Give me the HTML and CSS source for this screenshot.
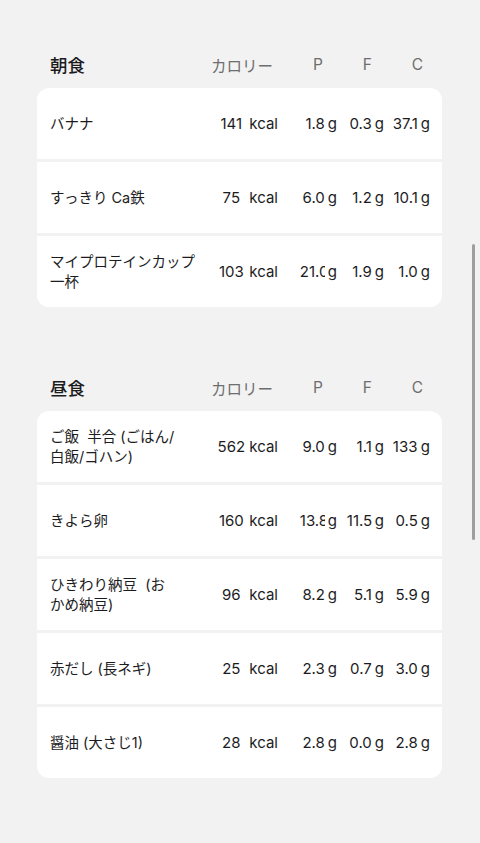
FILE: index.html
```html
<!DOCTYPE html>
<html lang="ja">
<head>
  <meta charset="UTF-8">
  <meta name="viewport" content="width=device-width, initial-scale=1.0">
  <title>食事記録</title>
  <link rel="stylesheet" href="styles.css">
</head>
<body>
  <div class="page">

    <section class="meal">
      <div class="meal-head">
        <h3 class="meal-title">朝食</h3>
        <span class="col-label label-cal">カロリー</span>
        <span class="col-label label-p">P</span>
        <span class="col-label label-f">F</span>
        <span class="col-label label-c">C</span>
      </div>
      <div class="card">
        <div class="row">
          <div class="name">バナナ</div>
          <div class="cal"><span class="num">141</span><span class="unit">kcal</span></div>
          <div class="gram"><span class="num">1.8</span><span class="unit">g</span></div>
          <div class="gram"><span class="num">0.3</span><span class="unit">g</span></div>
          <div class="gram"><span class="num">37.1</span><span class="unit">g</span></div>
        </div>
        <div class="row">
          <div class="name">すっきり Ca鉄</div>
          <div class="cal"><span class="num">75</span><span class="unit">kcal</span></div>
          <div class="gram"><span class="num">6.0</span><span class="unit">g</span></div>
          <div class="gram"><span class="num">1.2</span><span class="unit">g</span></div>
          <div class="gram"><span class="num">10.1</span><span class="unit">g</span></div>
        </div>
        <div class="row">
          <div class="name">マイプロテインカップ<br>一杯</div>
          <div class="cal"><span class="num">103</span><span class="unit">kcal</span></div>
          <div class="gram"><span class="num">21.0</span><span class="unit">g</span></div>
          <div class="gram"><span class="num">1.9</span><span class="unit">g</span></div>
          <div class="gram"><span class="num">1.0</span><span class="unit">g</span></div>
        </div>
      </div>
    </section>

    <section class="meal">
      <div class="meal-head">
        <h3 class="meal-title">昼食</h3>
        <span class="col-label label-cal">カロリー</span>
        <span class="col-label label-p">P</span>
        <span class="col-label label-f">F</span>
        <span class="col-label label-c">C</span>
      </div>
      <div class="card">
        <div class="row">
          <div class="name">ご飯&nbsp; 半合 (ごはん/<br>白飯/ゴハン)</div>
          <div class="cal"><span class="num">562</span><span class="unit">kcal</span></div>
          <div class="gram"><span class="num">9.0</span><span class="unit">g</span></div>
          <div class="gram"><span class="num">1.1</span><span class="unit">g</span></div>
          <div class="gram"><span class="num">133.0</span><span class="unit">g</span></div>
        </div>
        <div class="row">
          <div class="name">きよら卵</div>
          <div class="cal"><span class="num">160</span><span class="unit">kcal</span></div>
          <div class="gram"><span class="num">13.8</span><span class="unit">g</span></div>
          <div class="gram"><span class="num">11.5</span><span class="unit">g</span></div>
          <div class="gram"><span class="num">0.5</span><span class="unit">g</span></div>
        </div>
        <div class="row">
          <div class="name">ひきわり納豆&nbsp; (お<br>かめ納豆)</div>
          <div class="cal"><span class="num">96</span><span class="unit">kcal</span></div>
          <div class="gram"><span class="num">8.2</span><span class="unit">g</span></div>
          <div class="gram"><span class="num">5.1</span><span class="unit">g</span></div>
          <div class="gram"><span class="num">5.9</span><span class="unit">g</span></div>
        </div>
        <div class="row">
          <div class="name">赤だし (長ネギ)</div>
          <div class="cal"><span class="num">25</span><span class="unit">kcal</span></div>
          <div class="gram"><span class="num">2.3</span><span class="unit">g</span></div>
          <div class="gram"><span class="num">0.7</span><span class="unit">g</span></div>
          <div class="gram"><span class="num">3.0</span><span class="unit">g</span></div>
        </div>
        <div class="row">
          <div class="name">醤油 (大さじ1)</div>
          <div class="cal"><span class="num">28</span><span class="unit">kcal</span></div>
          <div class="gram"><span class="num">2.8</span><span class="unit">g</span></div>
          <div class="gram"><span class="num">0.0</span><span class="unit">g</span></div>
          <div class="gram"><span class="num">2.8</span><span class="unit">g</span></div>
        </div>
      </div>
    </section>

  </div>

  <div class="scrollbar"></div>
</body>
</html>
```

FILE: styles.css
```css
body {
  margin: 0;
  background: #f2f2f2;
  color: #1c1c1e;
  font-family: "Inter", "Noto Sans CJK JP", sans-serif;
}

.page {
  padding: 41px 38px 40px 37px;
}

.meal {
  margin-bottom: 57px;
}

.meal:last-child {
  margin-bottom: 0;
}

.meal-head,
.row {
  display: grid;
  grid-template-columns: 1fr 75px 59px 47px 46px;
  align-items: center;
  padding: 0 12px 0 13px;
}

.meal-head {
  height: 47px;
}

.meal-title {
  margin: 0;
  font-size: 17.5px;
  font-weight: 500;
}

.col-label {
  font-size: 15.5px;
  color: #6e6e6e;
  text-align: right;
}

.label-cal { padding-right: 5px; }
.label-p { padding-right: 14px; }
.label-f { padding-right: 12px; }
.label-c { padding-right: 7px; }

.card {
  border-radius: 12px;
  overflow: hidden;
  display: flex;
  flex-direction: column;
  gap: 3px;
}

.row {
  height: 71px;
  background: #fff;
  font-size: 14.5px;
  line-height: 20px;
}

.cal,
.gram {
  display: flex;
  justify-content: flex-end;
  font-size: 15px;
  white-space: nowrap;
}

.cal .num {
  width: 30px;
  text-align: center;
}

.cal .unit {
  margin-left: 3px;
}

/* wide values get cut on the right, like the app does */
.gram .num {
  display: flex;
  justify-content: safe flex-end;
  width: 25px;
  overflow: hidden;
}

.gram .unit {
  margin-left: 3px;
}

.scrollbar {
  position: fixed;
  top: 244px;
  right: 5px;
  width: 3px;
  height: 296px;
  border-radius: 2px;
  background: #9e9e9e;
}
```
